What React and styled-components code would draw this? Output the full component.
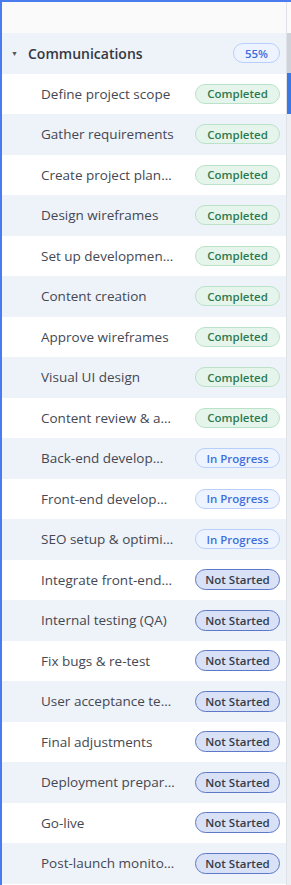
import React from "react";
import styled, { createGlobalStyle } from "styled-components";

const GlobalStyle = createGlobalStyle`
  html, body {
    margin: 0;
    padding: 0;
    background: #ffffff;
  }
  body {
    font-family: "Open Sans", "Noto Sans", sans-serif;
  }
`;

const tasks = [
  ["Define project scope", "done"],
  ["Gather requirements", "done"],
  ["Create project plan and timeline", "done"],
  ["Design wireframes", "done"],
  ["Set up development environment", "done"],
  ["Content creation", "done"],
  ["Approve wireframes", "done"],
  ["Visual UI design", "done"],
  ["Content review & approval", "done"],
  ["Back-end development", "progress"],
  ["Front-end development", "progress"],
  ["SEO setup & optimization", "progress"],
  ["Integrate front-end and back-end", "todo"],
  ["Internal testing (QA)", "todo"],
  ["Fix bugs & re-test", "todo"],
  ["User acceptance testing", "todo"],
  ["Final adjustments", "todo"],
  ["Deployment preparation", "todo"],
  ["Go-live", "todo"],
  ["Post-launch monitoring", "todo"],
];

const statusLabel = {
  done: "Completed",
  progress: "In Progress",
  todo: "Not Started",
};

const statusColors = {
  done: { bg: "#e5f5eb", border: "#b9e2c8", text: "#2d7a4e" },
  progress: { bg: "#eef4ff", border: "#b7cffa", text: "#3d6fdc" },
  todo: { bg: "#d8e1f6", border: "#5d78c6", text: "#353c4a" },
};

const Frame = styled.div`
  display: flex;
  height: 885px;
  border-top: 2px solid #4a7cf0;
  border-left: 2px solid #4a7cf0;
  box-sizing: border-box;
  overflow: hidden;
`;

const Main = styled.div`
  flex: 1;
  min-width: 0;
  display: flex;
  flex-direction: column;
`;

const TopGap = styled.div`
  height: 31px;
  flex: none;
  background: #fafafa;
`;

const Row = styled.div`
  flex: none;
  height: 40.5px;
  display: grid;
  grid-template-columns: minmax(0, 1fr) auto;
  align-items: center;
  column-gap: 20px;
  padding: 0 6px 0 ${(p) => (p.$header ? "9px" : "39px")};
  background: ${(p) => (p.$alt ? "#eef2f9" : "#ffffff")};
`;

const GroupTitle = styled.div`
  display: flex;
  align-items: center;
  gap: 10px;
  font-size: 14px;
  font-weight: 600;
  color: #333843;
`;

const Caret = styled.span`
  font-size: 7px;
  color: #555;
  width: 7px;
  text-align: center;
`;

const TaskName = styled.div`
  font-size: 13.5px;
  color: #444852;
  white-space: nowrap;
  overflow: hidden;
  text-overflow: ellipsis;
`;

const Badge = styled.span`
  box-sizing: border-box;
  width: ${(p) => p.$w || "85px"};
  height: ${(p) => (p.$status === "todo" ? "21px" : "20px")};
  border-radius: 11px;
  display: flex;
  align-items: center;
  justify-content: center;
  font-size: 11.5px;
  font-weight: 600;
  background: ${(p) => statusColors[p.$status].bg};
  border: 1.5px solid ${(p) => statusColors[p.$status].border};
  color: ${(p) => statusColors[p.$status].text};
`;

const ScrollStrip = styled.div`
  width: 4px;
  flex: none;
  display: flex;
  flex-direction: column;
  background: #eceef2;
  border-left: 1px solid #dfe2e7;
`;

const StripPart = styled.div`
  flex: none;
  height: ${(p) => p.$h};
  background: ${(p) => p.$c};
`;

export default function App() {
  return (
    <>
      <GlobalStyle />
      <Frame>
        <Main>
          <TopGap />
          <Row $header $alt>
            <GroupTitle>
              <Caret>▼</Caret>
              Communications
            </GroupTitle>
            <Badge $status="progress" $w="47px">
              55%
            </Badge>
          </Row>
          {tasks.map(([name, status], i) => (
            <Row key={name} $alt={i % 2 === 1}>
              <TaskName>{name}</TaskName>
              <Badge $status={status}>{statusLabel[status]}</Badge>
            </Row>
          ))}
        </Main>
        <ScrollStrip>
          <StripPart $h="31px" $c="#fafafa" />
          <StripPart $h="40px" $c="#cfd3d9" />
          <StripPart $h="41px" $c="#3a78e6" />
        </ScrollStrip>
      </Frame>
    </>
  );
}
